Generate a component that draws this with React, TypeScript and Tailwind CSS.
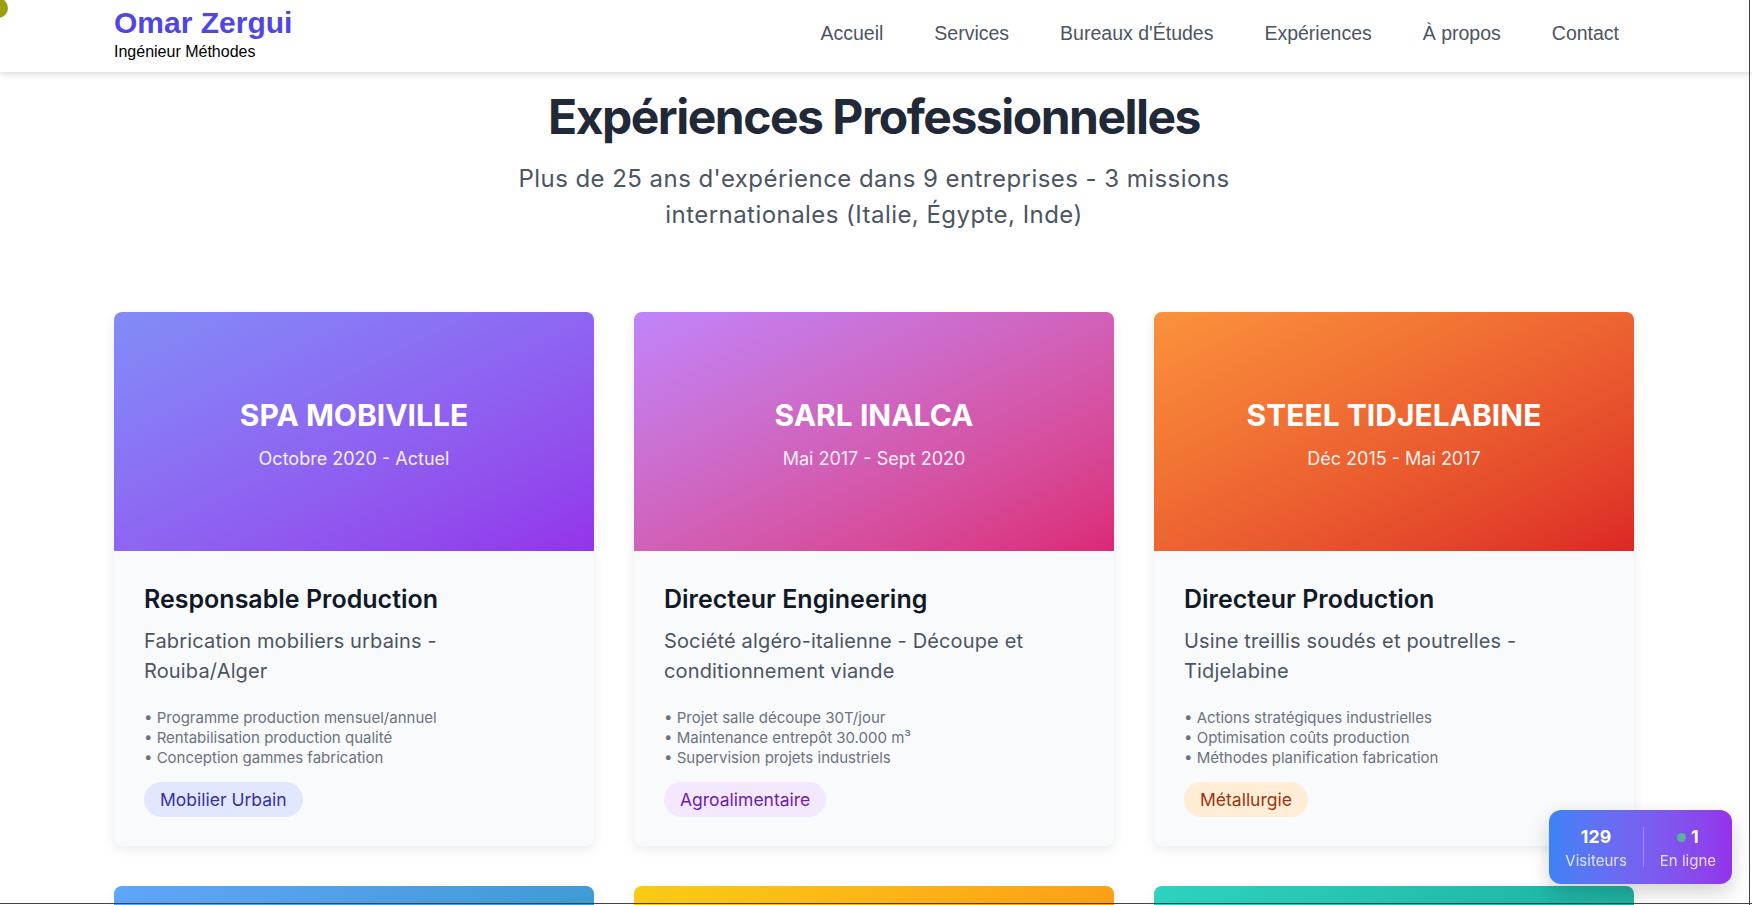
import React from "react";

type Experience = {
    company: string;
    period: string;
    role: string;
    description: string;
    tasks: string[];
    sector: string;
    gradient: string;
    tag: string;
};

const experiences: Experience[] = [
    {
        company: "SPA MOBIVILLE",
        period: "Octobre 2020 - Actuel",
        role: "Responsable Production",
        description: "Fabrication mobiliers urbains - Rouiba/Alger",
        tasks: [
            "Programme production mensuel/annuel",
            "Rentabilisation production qualité",
            "Conception gammes fabrication",
        ],
        sector: "Mobilier Urbain",
        gradient: "bg-gradient-to-br from-[#818cf8] to-[#9333ea]",
        tag: "bg-[#e0e7ff] text-[#3730a3]",
    },
    {
        company: "SARL INALCA",
        period: "Mai 2017 - Sept 2020",
        role: "Directeur Engineering",
        description: "Société algéro-italienne - Découpe et conditionnement viande",
        tasks: [
            "Projet salle découpe 30T/jour",
            "Maintenance entrepôt 30.000 m³",
            "Supervision projets industriels",
        ],
        sector: "Agroalimentaire",
        gradient: "bg-gradient-to-br from-[#c084fc] to-[#db2777]",
        tag: "bg-[#f3e8ff] text-[#6b21a8]",
    },
    {
        company: "STEEL TIDJELABINE",
        period: "Déc 2015 - Mai 2017",
        role: "Directeur Production",
        description: "Usine treillis soudés et poutrelles - Tidjelabine",
        tasks: [
            "Actions stratégiques industrielles",
            "Optimisation coûts production",
            "Méthodes planification fabrication",
        ],
        sector: "Métallurgie",
        gradient: "bg-gradient-to-br from-[#fb923c] to-[#dc2626]",
        tag: "bg-[#ffedd5] text-[#9a3412]",
    },
    {
        company: "ENMTP",
        period: "Mars 2010 - Nov 2015",
        role: "Chef Département Méthodes",
        description: "Matériels de travaux publics - Aïn Smara",
        tasks: [
            "Industrialisation nouveaux produits",
            "Gammes et temps standards",
            "Amélioration continue",
        ],
        sector: "Mécanique",
        gradient: "bg-gradient-to-br from-[#60a5fa] to-[#0891b2]",
        tag: "bg-[#dbeafe] text-[#1e40af]",
    },
    {
        company: "SNVI",
        period: "Janv 2004 - Fév 2010",
        role: "Ingénieur Méthodes",
        description: "Véhicules industriels - Rouiba",
        tasks: [
            "Études de postes de travail",
            "Outillages et montages",
            "Mission Italie",
        ],
        sector: "Automobile",
        gradient: "bg-gradient-to-br from-[#facc15] to-[#f97316]",
        tag: "bg-[#fef9c3] text-[#854d0e]",
    },
    {
        company: "ANABIB",
        period: "1998 - 2003",
        role: "Ingénieur Production",
        description: "Fabrication de tubes soudés - Réghaïa",
        tasks: [
            "Suivi de production",
            "Mission Égypte et Inde",
            "Contrôle qualité",
        ],
        sector: "Sidérurgie",
        gradient: "bg-gradient-to-br from-[#2dd4bf] to-[#0d9488]",
        tag: "bg-[#ccfbf1] text-[#115e59]",
    },
];

const navLinks = ["Accueil", "Services", "Bureaux d'Études", "Expériences", "À propos", "Contact"];

const ExperienceCard = ({ exp }: { exp: Experience }) => (
    <div className="overflow-hidden rounded-lg bg-[#f9fafb] shadow-[0_4px_12px_rgba(0,0,0,0.08)]">
        <div className={`flex h-[239px] flex-col items-center justify-center pt-[6px] text-white ${exp.gradient}`}>
            <h3 className="text-3xl leading-9 font-bold">{exp.company}</h3>
            <p className="mt-[12px] text-lg leading-7 opacity-90">{exp.period}</p>
        </div>
        <div className="px-[30px] pt-8 pb-[29px]">
            <h4 className="mb-[11px] text-[25px] leading-8 font-semibold text-[#111827]">{exp.role}</h4>
            <p className="mb-[22px] text-xl leading-[30px] tracking-[0.15px] text-[#4b5563]">{exp.description}</p>
            <ul className="mb-[14px] text-[15px] leading-5 text-[#6b7280]">
                {exp.tasks.map((t) => (
                    <li key={t}>• {t}</li>
                ))}
            </ul>
            <span className={`inline-block rounded-full px-4 py-[3.5px] text-[17.5px] leading-7 ${exp.tag}`}>
                {exp.sector}
            </span>
        </div>
    </div>
);

export default function App() {
    return (
        <div className="relative min-h-screen bg-white font-['Inter',sans-serif]">
            {/* cursor follower dot */}
            <div className="absolute -top-[2px] -left-[12px] z-50 h-5 w-5 rounded-full bg-[#9d9d10]" />

            <header className="relative z-10 h-[72px] bg-white shadow-[0_3px_6px_rgba(0,0,0,0.12)]">
                <div className="ml-[114px] flex w-[1520px] items-start justify-between font-['Liberation_Sans',Arial,sans-serif]">
                    <div className="pt-[5px]">
                        <div className="text-[30px] leading-9 font-bold text-[#4f46e5]">Omar Zergui</div>
                        <div className="text-base leading-[22px] text-black">Ingénieur Méthodes</div>
                    </div>
                    <nav className="flex h-[68px] items-center gap-[51px] pr-[15px]">
                        {navLinks.map((l) => (
                            <a key={l} className="text-[19.5px] text-[#4b5563]">
                                {l}
                            </a>
                        ))}
                    </nav>
                </div>
            </header>

            <section className="pt-[21px]">
                <div className="ml-[114px] w-[1520px]">
                    <div className="mb-[80px] text-center">
                        <h2 className="mb-5 text-5xl leading-[48px] font-bold tracking-[-1.5px] text-[#1f2937]">
                            Expériences Professionnelles
                        </h2>
                        <p className="mx-auto max-w-3xl text-2xl leading-[35.5px] tracking-[0.45px] text-[#4b5563]">
                            Plus de 25 ans d'expérience dans 9 entreprises - 3 missions internationales (Italie,
                            Égypte, Inde)
                        </p>
                    </div>
                    <div className="grid grid-cols-3 gap-10">
                        {experiences.map((e) => (
                            <ExperienceCard key={e.company} exp={e} />
                        ))}
                    </div>
                </div>
            </section>

            {/* visitor counter */}
            <div className="fixed right-[20px] bottom-[21px] z-40 flex items-center gap-4 rounded-xl bg-gradient-to-r from-[#3b82f6] to-[#9333ea] px-4 py-[13px] text-white shadow-[0_8px_20px_rgba(0,0,0,0.18)]">
                <div className="text-center">
                    <div className="text-lg leading-7 font-bold">129</div>
                    <div className="text-[15px] leading-5 opacity-80">Visiteurs</div>
                </div>
                <div className="h-10 w-px bg-white/30" />
                <div className="text-center">
                    <div className="flex items-center justify-center gap-[5px] text-lg leading-7 font-bold">
                        <span className="h-[9px] w-[9px] rounded-full bg-[#52b79a]" />
                        1
                    </div>
                    <div className="text-[15px] leading-5 opacity-80">En ligne</div>
                </div>
            </div>

            {/* window frame edges */}
            <div className="fixed top-0 right-[2px] bottom-0 z-50 w-px bg-[#444]" />
            <div className="fixed right-0 bottom-[1px] left-0 z-50 h-px bg-[#444]" />
        </div>
    );
}
